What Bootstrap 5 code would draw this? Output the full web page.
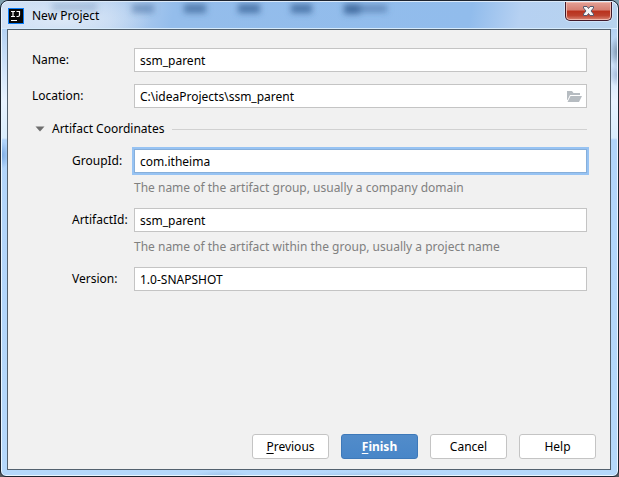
<!DOCTYPE html>
<html lang="en">
<head>
<meta charset="utf-8">
<meta name="viewport" content="width=device-width, initial-scale=1">
<title>New Project</title>
<link rel="stylesheet" href="https://cdn.jsdelivr.net/npm/bootstrap@5.3.0/dist/css/bootstrap.min.css">
<style>
body { font-family: "Noto Sans", "Open Sans", sans-serif; font-size: 12px; line-height: 18px; color: #000; background: linear-gradient(#7f9fae, #56585c); }
.window {
  border: 1px solid #1d2430; border-radius: 8px 8px 6px 6px; padding: 0 7px 6px 6px;
  box-shadow: inset 0 0 0 1px #eaf6ff;
  background:
    radial-gradient(ellipse 9px 16px at 100% 51px, #5f7891bb, transparent),
    radial-gradient(ellipse 9px 12px at 100% 74px, #7c95bd99, transparent),
    radial-gradient(ellipse 9px 14px at 0 154px, #78a8e2, transparent),
    radial-gradient(ellipse 30px 5px at 220px 100%, #7ba3cb66, transparent),
    radial-gradient(ellipse 100px 4px at 370px 100%, #86a9cb66, transparent),
    linear-gradient(#a9c9ef 0, #b5d2f3 30px, #e8f3ff 100px, #d9edfc 137px, #b1d4fa 139px, #b5d8fb 100%);
}
.titlebar {
  height: 28px; margin: 0 -6px 0 -5px; padding: 1px 5px 0 6px;
  border-top: 1px solid #dceaf9; border-bottom: 1px solid #d6ebfc; border-radius: 7px 7px 0 0;
  background:
    radial-gradient(ellipse 90px 24px at 60px 18px, #dce8f7, transparent),
    linear-gradient(100deg, #cfdff4 0, #bcd4f1 18%, #94bdeb 28%, #91bcec 76%, #b6d1f2 84%, #b7d3ee 100%);
}
.glass { left: 0; top: 0; z-index: 0; pointer-events: none; }
.titlebar > :not(.glass) { position: relative; z-index: 1; }
.app-icon { width: 16px; height: 16px; }
.close-btn {
  width: 47px; height: 19px; margin-top: -1px; padding: 0; border: 1px solid #41192a; border-top: 0; border-radius: 0 0 5px 5px;
  box-shadow: inset 0 0 0 1px #f0b8ac, 0 0 0 1px #e2effb99;
  background: linear-gradient(#e3a197 0, #d57e71 45%, #b9311c 50%, #bd422e 75%, #da8877 100%);
}
.pane { border: 1px solid #53616e; background: #f1f1f1; padding: 18px 14px 10px 24px; }
.fields { display: grid; grid-template-columns: 40px 62px 1fr; padding-right: 9px; }
.fields label { align-self: center; white-space: nowrap; }
.wide { grid-column: span 2; }
.sub { grid-column: 2; }
.text-box { height: 24px; min-height: 24px; padding: 0 5px; border: 1px solid #c4c4c4; border-radius: 0; background: #fff; color: #000; font-size: 12px; line-height: 20px; }
.text-box.active, .text-box:focus { color: #000; border-color: #87afda; box-shadow: 0 0 0 2px #97c3f3; }
.name-row { margin-bottom: 12px; }
.section { grid-column: 1 / -1; margin: 12px 0 11px; height: 18px; }
.section-toggle { border: 0; background: none; padding: 0 0 0 3px; color: #000; line-height: 18px; }
.section-toggle svg { margin-right: 7px; }
.rule { height: 1px; background: #d1d1d1; }
.hint { grid-column: 3; margin: 6px 0 11px; color: #808080; white-space: nowrap; }
.browse { right: 5px; top: 5px; border: 0; padding: 0; background: none; line-height: 0; }
.actions { gap: 12px; }
.dlg-btn { width: 77px; height: 25px; padding: 0; border: 1px solid #c4c4c4; border-radius: 3px; background: #fff; color: #000; font-size: 12px; line-height: 22px; }
.dlg-btn.main { border-color: #3e79b9; background: linear-gradient(#528cca, #4886c8); color: #fff; font-weight: 700; }
.dlg-btn u { text-underline-offset: 2px; }
</style>
</head>
<body>
<main class="window d-flex flex-column min-vh-100">
  <header class="titlebar position-relative d-flex align-items-center">
    <svg class="glass position-absolute" width="400" height="26" viewBox="0 0 400 26" aria-hidden="true">
      <defs><filter id="haze" x="-10%" y="-100%" width="120%" height="300%"><feGaussianBlur stdDeviation="3"/></filter></defs>
      <g filter="url(#haze)" fill="#315a8e">
        <path d="M50 1h45v8H50z" opacity=".25"/>
        <path d="M130 2h22v9h-22z" opacity=".45"/>
        <path d="M182 2h22v9h-22z" opacity=".65"/>
        <path d="M236 2h22v9h-22z" opacity=".7"/>
        <path d="M289 2h21v9h-21z" opacity=".7"/>
        <path d="M342 2h16v10h-16z" opacity=".8"/>
        <path d="M358 3h27v7h-27z" opacity=".5"/>
      </g>
    </svg>
    <svg class="app-icon" viewBox="0 0 16 16" aria-hidden="true">
      <rect width="16" height="16" fill="#087cfa"/><rect x="1" y="1" width="14" height="14" fill="#080808"/>
      <path d="M3 3.500h4M5 3.500v5M3 8.500h4M8.500 3.500h3v3.500q0 1.500-1.500 1.500h-1.500M3 12.500h6" fill="none" stroke="#fff" stroke-width="1.200"/>
    </svg>
    <span class="ms-1 ps-1 flex-grow-1">New Project</span>
    <button class="close-btn align-self-start d-flex justify-content-center align-items-center" type="button" aria-label="Close">
      <svg width="13" height="12" viewBox="0 0 13 12"><path d="M1.500 1.500H5L6.500 3.500 8 1.500h3.500V3L9 6l2.500 3v1.500H8L6.500 8.500 5 10.500H1.500V9L4 6 1.500 3z" fill="#f6f6f6" stroke="#55586d"/></svg>
    </button>
  </header>
  <form class="pane flex-grow-1 d-flex flex-column">
    <div class="fields">
      <label class="wide name-row" for="name">Name:</label>
      <input class="form-control text-box name-row" id="name" type="text" value="ssm_parent">
      <label class="wide" for="location">Location:</label>
      <div class="position-relative">
        <input class="form-control text-box" id="location" type="text" value="C:\ideaProjects\ssm_parent">
        <button class="browse position-absolute" type="button" aria-label="Browse">
          <svg width="16" height="14" viewBox="0 0 16 14"><path d="M1 2h5l1.500 2H14v2H4L1.500 11H1z" fill="#b6bcc1"/><path d="M4.500 7H16l-3 6H1.500z" fill="#b6bcc1"/></svg>
        </button>
      </div>
      <div class="section d-flex align-items-center">
        <button class="section-toggle d-flex align-items-center" type="button" aria-expanded="true">
          <svg width="10" height="6" viewBox="0 0 10 6"><path d="M.5.5h9L5 5.500z" fill="#6e6e6e"/></svg>Artifact Coordinates
        </button>
        <div class="rule flex-grow-1 ms-2"></div>
      </div>
      <label class="sub" for="group">GroupId:</label>
      <input class="form-control text-box active" id="group" type="text" value="com.itheima">
      <div class="hint">The name of the artifact group, usually a company domain</div>
      <label class="sub" for="artifact">ArtifactId:</label>
      <input class="form-control text-box" id="artifact" type="text" value="ssm_parent">
      <div class="hint">The name of the artifact within the group, usually a project name</div>
      <label class="sub" for="version">Version:</label>
      <input class="form-control text-box" id="version" type="text" value="1.0-SNAPSHOT">
    </div>
    <div class="actions d-flex justify-content-end mt-auto">
      <button class="btn dlg-btn" type="button"><u>P</u>revious</button>
      <button class="btn dlg-btn main" type="submit"><u>F</u>inish</button>
      <button class="btn dlg-btn" type="button">Cancel</button>
      <button class="btn dlg-btn" type="button">Help</button>
    </div>
  </form>
</main>
<script src="https://cdn.jsdelivr.net/npm/bootstrap@5.3.0/dist/js/bootstrap.bundle.min.js"></script>
</body>
</html>
